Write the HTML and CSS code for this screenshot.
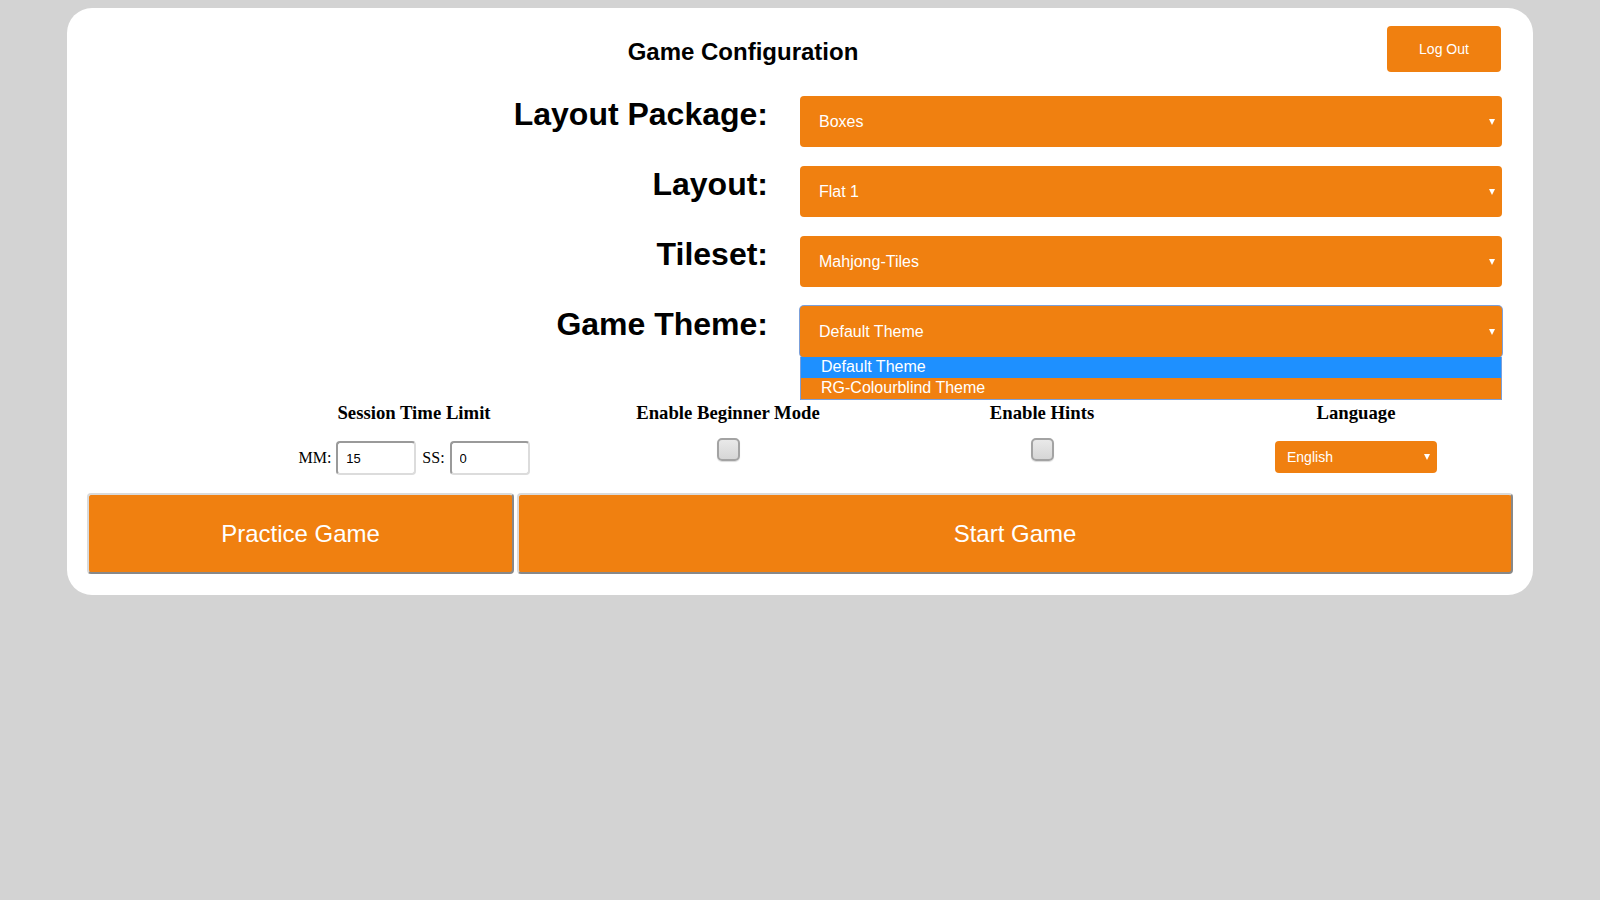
FILE: index.html
```html
<!DOCTYPE html>
<html lang="en">
<head>
<meta charset="utf-8">
<title>Game Configuration</title>
<link rel="stylesheet" href="styles.css">
</head>
<body>
<main class="card">
  <header class="header">
    <h1 class="title">Game Configuration</h1>
    <button class="logout" type="button">Log Out</button>
  </header>

  <section class="form">
    <div class="row">
      <div class="label">Layout Package:</div>
      <div class="select"><span class="value">Boxes</span></div>
    </div>
    <div class="row">
      <div class="label">Layout:</div>
      <div class="select"><span class="value">Flat 1</span></div>
    </div>
    <div class="row">
      <div class="label">Tileset:</div>
      <div class="select"><span class="value">Mahjong-Tiles</span></div>
    </div>
    <div class="row">
      <div class="label">Game Theme:</div>
      <div class="select focused">
        <span class="value">Default Theme</span>
        <ul class="options">
          <li class="option selected">Default Theme</li>
          <li class="option">RG-Colourblind Theme</li>
        </ul>
      </div>
    </div>
  </section>

  <section class="settings">
    <div class="setting">
      <div class="setting-label">Session Time Limit</div>
      <div class="time">
        <span class="time-label">MM:</span>
        <input class="num" type="text" value="15">
        <span class="time-label ss">SS:</span>
        <input class="num" type="text" value="0">
      </div>
    </div>
    <div class="setting">
      <div class="setting-label">Enable Beginner Mode</div>
      <input class="check" type="checkbox">
    </div>
    <div class="setting">
      <div class="setting-label">Enable Hints</div>
      <input class="check" type="checkbox">
    </div>
    <div class="setting">
      <div class="setting-label">Language</div>
      <div class="lang"><span class="value">English</span></div>
    </div>
  </section>

  <div class="actions">
    <button class="btn practice" type="button">Practice Game</button>
    <button class="btn start" type="button">Start Game</button>
  </div>
</main>
</body>
</html>
```

FILE: styles.css
```css
* {
  box-sizing: border-box;
}

html, body {
  margin: 0;
  padding: 0;
}

body {
  background: #d3d3d3;
  padding: 8px 0;
  font-family: "Liberation Sans", Arial, sans-serif;
  min-height: 900px;
}

.card {
  width: 1466px;
  margin: 0 auto;
  background: #ffffff;
  border-radius: 25px;
  padding: 18px 20px 21px 20px;
}

/* header */
.header {
  display: flex;
  align-items: flex-start;
  height: 46px;
}

.title {
  flex: 1;
  margin: 0;
  padding: 12px 0 0 12px;
  text-align: center;
  font-size: 24px;
  font-weight: bold;
  line-height: normal;
  color: #000;
}

.logout {
  width: 114px;
  height: 46px;
  margin: 0 12px 0 0;
  border: none;
  border-radius: 4px;
  background: #f08010;
  color: #fff;
  font-family: "Liberation Sans", Arial, sans-serif;
  font-size: 14px;
  padding: 0;
}

/* form rows */
.form {
  margin-top: 24px;
  display: flex;
  flex-direction: column;
  gap: 19px;
}

.row {
  display: grid;
  grid-template-columns: 681px 702px;
  column-gap: 32px;
  align-items: start;
}

.label {
  text-align: right;
  font-size: 32px;
  font-weight: bold;
  line-height: normal;
  color: #000;
  padding-right: 0;
}

.select {
  position: relative;
  height: 51px;
  background: #f08010;
  border-radius: 4px;
  color: #fff;
  font-size: 16px;
  display: flex;
  align-items: center;
  padding-left: 19px;
}

.select::after,
.lang::after {
  content: "";
  position: absolute;
  right: 7px;
  top: 50%;
  margin-top: -3px;
  border-left: 3px solid transparent;
  border-right: 3px solid transparent;
  border-top: 6px solid #fff;
}

.select.focused {
  box-shadow: 0 0 0 1px #7b9fd9;
}

.options {
  position: absolute;
  left: 0;
  right: 0;
  top: 51px;
  margin: 0;
  padding: 0;
  list-style: none;
  border: 1px solid #7b9fd9;
  border-top: none;
  background: #f08010;
  z-index: 2;
}

.option {
  height: 21px;
  line-height: 20px;
  padding-left: 20px;
  font-size: 16px;
  color: #fff;
}

.option.selected {
  background: #1e90ff;
}

/* settings */
.settings {
  margin-top: 44px;
  margin-left: 170px;
  display: grid;
  grid-template-columns: repeat(4, 314px);
  align-items: start;
}

.setting {
  display: flex;
  flex-direction: column;
  align-items: center;
}

.setting-label {
  font-family: "Liberation Serif", "Times New Roman", serif;
  font-weight: bold;
  font-size: 18.72px;
  line-height: 21px;
  color: #000;
  margin-top: 1px;
  margin-bottom: 18px;
}

.time {
  display: flex;
  align-items: center;
  gap: 5px;
  font-family: "Liberation Serif", "Times New Roman", serif;
  font-size: 16px;
  color: #000;
}

.time-label.ss {
  margin-left: 1px;
}

.num {
  width: 80px;
  height: 34px;
  margin: 0;
  padding: 0 8px;
  border-style: solid;
  border-width: 2px;
  border-color: #9a9a9a #dcdcdc #dcdcdc #9a9a9a;
  border-radius: 4px;
  font-family: "Liberation Sans", Arial, sans-serif;
  font-size: 13px;
  color: #000;
  background: #fff;
}

.check {
  appearance: none;
  -webkit-appearance: none;
  width: 23px;
  height: 23px;
  margin: -3px 0 0 0;
  border: 2px solid #a3a3a3;
  border-radius: 5px;
  background: linear-gradient(#e9e9e9, #d6d6d6);
  box-shadow: 0 1px 1px rgba(0, 0, 0, 0.15);
}

.lang {
  position: relative;
  width: 162px;
  height: 32px;
  background: #f08010;
  border-radius: 4px;
  color: #fff;
  font-size: 14px;
  display: flex;
  align-items: center;
  padding-left: 12px;
}

/* action buttons */
.actions {
  margin-top: 18px;
  display: flex;
  gap: 3px;
}

.btn {
  height: 81px;
  margin: 0;
  padding: 0;
  background: #f08010;
  color: #fff;
  font-family: "Liberation Sans", Arial, sans-serif;
  font-size: 24px;
  border-style: solid;
  border-width: 2px;
  border-color: #dadada #888888 #888888 #dadada;
  border-radius: 4px;
}

.practice {
  width: 427px;
}

.start {
  flex: 1;
}
```
